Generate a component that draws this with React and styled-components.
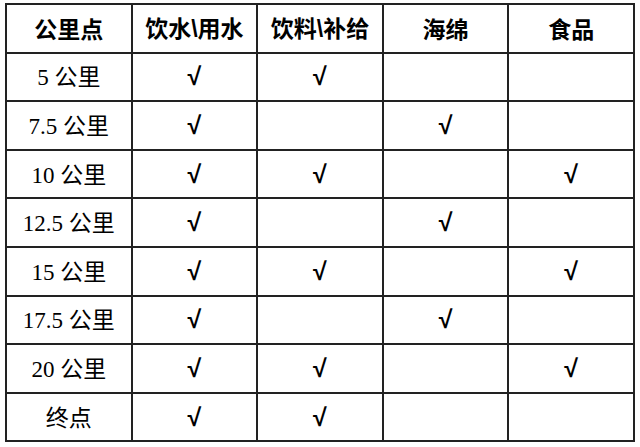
import React from 'react'
import styled, { createGlobalStyle } from 'styled-components'

const GlobalStyle = createGlobalStyle`
html, body {
  margin: 0;
  padding: 0;
  background: #ffffff;
}
`

const Page = styled.div`
padding: 3px 5px 0 5px;
`

const Table = styled.table`
width: 630px;
border-collapse: collapse;
table-layout: fixed;
border: 2px solid #222;
color: #000;
`

const Row = styled.tr`
height: 48.6px;
`

const Th = styled.th`
border: 2px solid #222;
font-family: "Noto Sans CJK SC", "Liberation Sans", sans-serif;
font-weight: 700;
font-size: 23px;
line-height: 1;
text-align: center;
vertical-align: middle;
padding: 0;
`

const Slash = styled.span`
font-family: "Liberation Sans", sans-serif;
font-weight: 700;
`

const Td = styled.td`
border: 2px solid #222;
text-align: center;
vertical-align: middle;
padding: 0;
line-height: 1;
font-size: ${p => p.label ? '23px' : '25px'};
font-weight: ${p => p.label ? 400 : 700};
font-family: ${p => p.label ? '"Liberation Serif", "Noto Sans CJK SC", serif' : '"Liberation Sans", sans-serif'};
`

const Cjk = styled.span`
font-family: "Noto Sans CJK SC", sans-serif;
font-weight: 400;
`

const headers = [['公里点'], ['饮水', '用水'], ['饮料', '补给'], ['海绵'], ['食品']]

const rows = [
  { num: '5', unit: '公里', marks: [1, 1, 0, 0] },
  { num: '7.5', unit: '公里', marks: [1, 0, 1, 0] },
  { num: '10', unit: '公里', marks: [1, 1, 0, 1] },
  { num: '12.5', unit: '公里', marks: [1, 0, 1, 0] },
  { num: '15', unit: '公里', marks: [1, 1, 0, 1] },
  { num: '17.5', unit: '公里', marks: [1, 0, 1, 0] },
  { num: '20', unit: '公里', marks: [1, 1, 0, 1] },
  { num: '', unit: '终点', marks: [1, 1, 0, 0] },
]

const App = () => {
  return (
    <Page>
      <GlobalStyle />
      <Table>
        <thead>
          <Row>
            {headers.map(h => (
              <Th key={h.join()}>
                {h[0]}
                {h[1] && <><Slash>\</Slash>{h[1]}</>}
              </Th>
            ))}
          </Row>
        </thead>
        <tbody>
          {rows.map(r => (
            <Row key={r.num + r.unit}>
              <Td label>
                {r.num && <>{r.num} </>}
                <Cjk>{r.unit}</Cjk>
              </Td>
              {r.marks.map((m, i) => <Td key={i}>{m ? '√' : ''}</Td>)}
            </Row>
          ))}
        </tbody>
      </Table>
    </Page>
  )
}

export default App
